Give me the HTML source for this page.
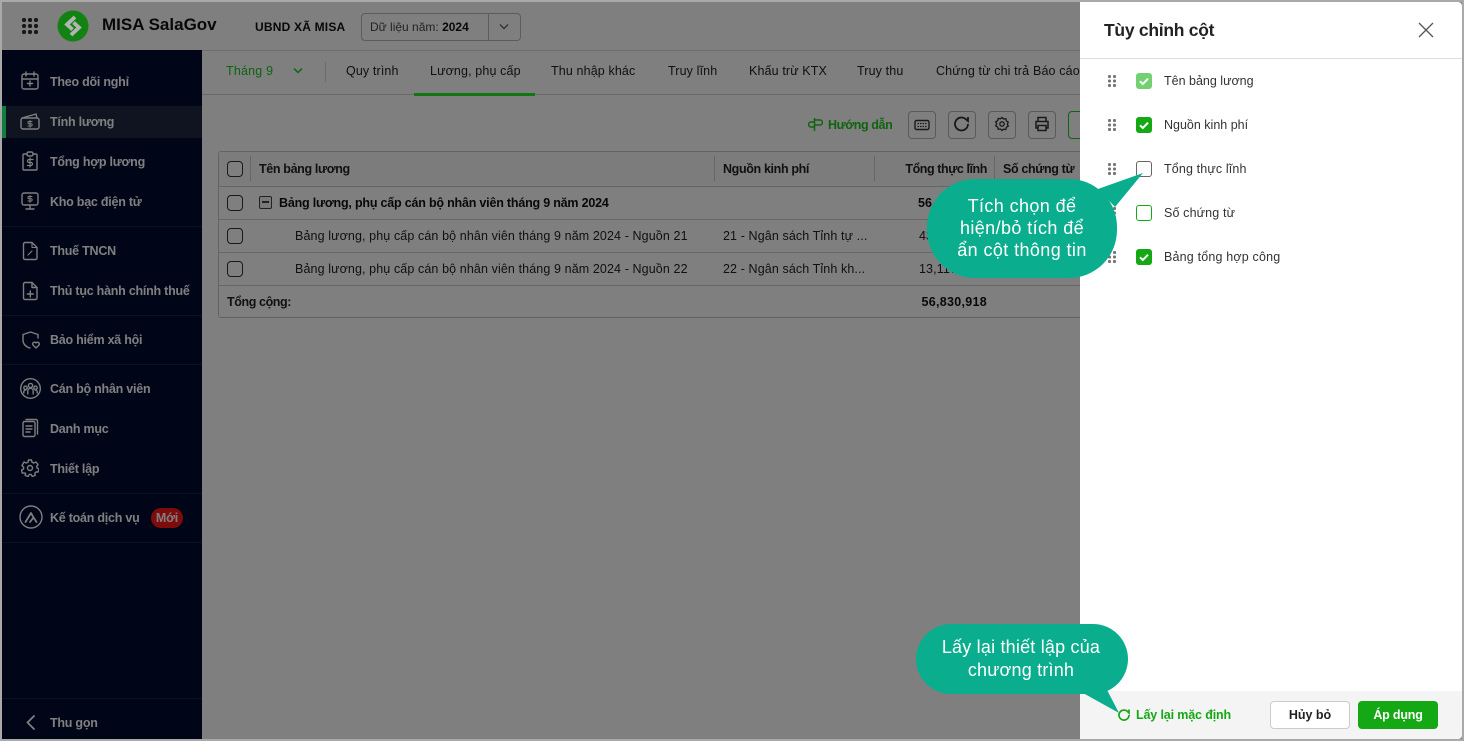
<!DOCTYPE html>
<html lang="vi"><head><meta charset="utf-8"><title>MISA SalaGov</title>
<style>
html,body{margin:0;padding:0;width:1464px;height:741px;overflow:hidden;background:#a9a9a9}
body{font-family:"Liberation Sans",Arial,sans-serif;font-size:13px;color:#222;position:relative}
.t{position:absolute;white-space:nowrap;line-height:16px}
.a{position:absolute}
#app{position:absolute;left:2px;top:2px;width:1460px;height:737px;background:#fff;overflow:hidden}
#root{position:absolute;left:-2px;top:-2px;width:1464px;height:741px}
#side{position:absolute;left:2px;top:50px;width:200px;height:691px;background:#010c30}
.s{color:#fff;font-weight:700;font-size:12.5px;letter-spacing:-.24px;left:50px}
.l{position:absolute;left:2px;width:200px;height:1px;background:#1a2340}
.ic{position:absolute;fill:none;stroke:#fff;stroke-width:1.4;stroke-linecap:round;stroke-linejoin:round}
.tab{top:63px;color:#222;font-size:12.5px;letter-spacing:.13px}
.tb{position:absolute;top:111px;width:26px;height:26px;border:1px solid #b5b5b5;border-radius:4px;background:#fff}
.cb{position:absolute;left:227px;width:14px;height:14px;border:1.5px solid #333;border-radius:4px;background:#fff}
.h{position:absolute;height:1px;left:218px;width:862px;background:#ccc}
.v{position:absolute;top:156px;height:25px;width:1px;background:#ccc}
.c{font-size:12.5px;letter-spacing:.11px}
.hd{top:161px;font-size:12.5px;font-weight:700;color:#222;letter-spacing:-.35px}
#ov{position:absolute;left:0;top:0;width:1464px;height:741px;background:rgba(0,0,0,.5)}
#panel{position:absolute;left:1080px;top:2px;width:382px;height:737px;background:#fff;border-radius:0 4px 4px 0;overflow:hidden}
.lb{position:absolute;left:84px;font-size:12.5px;color:#333;line-height:16px;white-space:nowrap;letter-spacing:.14px}
.box{position:absolute;left:56px;width:16px;height:16px;border-radius:3px;box-sizing:border-box}
.on{background:#14a814}
.dots{position:absolute;left:28px;width:8px;height:12px;background-image:radial-gradient(circle at 1.5px 1.5px,#777 1.5px,transparent 1.7px);background-size:5px 4.5px}
.callout{color:#fff;font-size:18px;line-height:22px;text-align:center;white-space:nowrap;position:absolute}
</style></head><body>
<div id="app"><div id="root">

<!-- header -->
<div class="a" style="left:22px;top:18px;width:17px;height:17px;background-image:radial-gradient(circle at 2px 2px,#333 2px,transparent 2.3px);background-size:6px 6px"></div>
<div class="t" style="left:102px;top:17px;font-size:17px;font-weight:700;color:#111">MISA SalaGov</div>
<div class="t" style="left:255px;top:19px;font-size:12px;font-weight:700;color:#111;letter-spacing:.2px">UBND XÃ MISA</div>
<div class="a" style="left:361px;top:13px;width:158px;height:26px;border:1px solid #b8b8b8;border-radius:4px"></div>
<div class="a" style="left:488px;top:14px;width:1px;height:26px;background:#b8b8b8"></div>
<div class="t" style="left:370px;top:19px;font-size:12px;color:#444">Dữ liệu năm: <b style="color:#111">2024</b></div>
<svg class="a" style="left:498px;top:23px" width="12" height="8" viewBox="0 0 12 8"><path d="M2 1.500l4 4 4-4" fill="none" stroke="#666" stroke-width="1.400"/></svg>
<div class="a" style="left:202px;top:50px;width:1262px;height:1px;background:#ddd"></div>

<!-- sidebar -->
<div id="side"></div>
<div class="a" style="left:2px;top:106px;width:200px;height:32px;background:#1e2840"></div>
<div class="a" style="left:2px;top:106px;width:4px;height:32px;background:#20ff80"></div>
<div class="l" style="top:226px"></div><div class="l" style="top:315px"></div><div class="l" style="top:364px"></div><div class="l" style="top:493px"></div><div class="l" style="top:542px"></div><div class="l" style="top:698px"></div>

<div class="t s" style="top:74px">Theo dõi nghỉ</div>
<div class="t s" style="top:114px">Tính lương</div>
<div class="t s" style="top:154px">Tổng hợp lương</div>
<div class="t s" style="top:194px">Kho bạc điện tử</div>
<div class="t s" style="top:243px">Thuế TNCN</div>
<div class="t s" style="top:283px">Thủ tục hành chính thuế</div>
<div class="t s" style="top:332px">Bảo hiểm xã hội</div>
<div class="t s" style="top:381px">Cán bộ nhân viên</div>
<div class="t s" style="top:421px">Danh mục</div>
<div class="t s" style="top:461px">Thiết lập</div>
<div class="t s" style="top:510px">Kế toán dịch vụ</div>
<div class="a" style="left:151px;top:508px;width:32px;height:20px;border-radius:10px;background:#ff1818"></div>
<div class="t" style="left:151px;top:510px;width:32px;text-align:center;color:#fff;font-weight:700;font-size:12.5px;letter-spacing:-.2px">Mới</div>
<div class="t s" style="top:715px">Thu gọn</div>

<svg class="ic" style="left:20px;top:71px" width="20" height="20" viewBox="0 0 20 20"><rect x="2" y="3" width="16" height="15" rx="2"/><path d="M2 8h16M6 1v4M14 1v4M10 10v5M7.500 12.500h5"/></svg>
<svg class="ic" style="left:20px;top:112px" width="20" height="18" viewBox="0 0 20 18"><rect x="1" y="6" width="18" height="11" rx="2"/><path d="M2 6l14-4 1 4"/><path d="M12 9.500H9a1 1 0 0 0 0 2.200h2a1 1 0 0 1 0 2.300H8M10 8.500v7" stroke-width="1"/></svg>
<svg class="ic" style="left:21px;top:151px" width="18" height="20" viewBox="0 0 18 20"><path d="M6 3H3a1 1 0 0 0-1 1v14a1 1 0 0 0 1 1h12a1 1 0 0 0 1-1V4a1 1 0 0 0-1-1h-3"/><rect x="6" y="1" width="6" height="4" rx="1.500"/><path d="M12 8.500H8a1.500 1.500 0 0 0 0 3h2a1.500 1.500 0 0 1 0 3H6.500M9 7v9" stroke-width="1.200"/></svg>
<svg class="ic" style="left:20px;top:191px" width="20" height="20" viewBox="0 0 20 20"><rect x="2" y="2" width="16" height="12" rx="2"/><path d="M10 14v4M6 18h8"/><path d="M12 5.500H9a1 1 0 0 0 0 2.200h2a1 1 0 0 1 0 2.300H8M10 4.500v7" stroke-width="1"/></svg>
<svg class="ic" style="left:21px;top:241px" width="18" height="20" viewBox="0 0 18 20"><path d="M4 1.500h7l5 5V17a1.500 1.500 0 0 1-1.500 1.500h-10.500A1.500 1.500 0 0 1 2.500 17V3A1.500 1.500 0 0 1 4 1.500z"/><path d="M11 1.500V6.500h5M7 14l4-4" stroke-width="1.100"/></svg>
<svg class="ic" style="left:21px;top:281px" width="18" height="20" viewBox="0 0 18 20"><path d="M4 1.500h7l5 5V17a1.500 1.500 0 0 1-1.500 1.500h-10.500A1.500 1.500 0 0 1 2.500 17V3A1.500 1.500 0 0 1 4 1.500z"/><path d="M11 1.500V6.500h5M9.300 10v6M6.300 13h6"/></svg>
<svg class="ic" style="left:21px;top:330px" width="20" height="20" viewBox="0 0 20 20"><path d="M17 8V4.500L9.500 2 2 4.500V10c0 4 3 7 7 8"/><path d="M15 18l-3-3a1.800 1.800 0 0 1 3-2 1.800 1.800 0 0 1 3 2z"/></svg>
<svg class="ic" style="left:20px;top:378px" width="21" height="21" viewBox="0 0 21 21"><circle cx="10.500" cy="10.500" r="9.800"/><circle cx="10.500" cy="7.500" r="2.100"/><circle cx="5.500" cy="9.800" r="1.700"/><circle cx="15.500" cy="9.800" r="1.700"/><path d="M7.800 16v-3a2.700 2.700 0 0 1 5.400 0v3M3.800 15v-1.500a1.800 1.800 0 0 1 2-1.500M17.200 15v-1.500a1.800 1.800 0 0 0-2-1.500"/></svg>
<svg class="ic" style="left:21px;top:418px" width="18" height="20" viewBox="0 0 18 20"><rect x="2" y="3.500" width="12" height="15" rx="1.500"/><path d="M5 1.500h10a1.500 1.500 0 0 1 1.500 1.500v13M5 8h6M5 11h6M5 14h4"/></svg>
<svg class="ic" style="left:21px;top:459px" width="18" height="18" viewBox="0 0 18 18"><circle cx="9" cy="9" r="2.500"/><path d="M7.500 1h3l.5 2.200 1.800.8L15 3l2 2.500-1.300 1.800.3 1.700 2 1-.8 3-2.200-.1-1.200 1.400.4 2.200-3 .9-1-2h-2l-1 2-3-.9.4-2.200L3.400 14l-2.200.1-.8-3 2-1 .3-1.700L1 6.500 3 3l2.200 1 1.800-.8z"/></svg>
<svg class="ic" style="left:19px;top:505px" width="24" height="24" viewBox="0 0 24 24"><circle cx="12" cy="12" r="11"/><path d="M6.500 17L12 8l2.500 4.500M11 17l3.500-4.500 3 4.500" stroke-width="1.800"/></svg>
<svg class="ic" style="left:24px;top:714px" width="13" height="17" viewBox="0 0 13 17"><path d="M10 2L3.500 8.500 10 15" stroke-width="1.800"/></svg>

<!-- tabs -->
<div class="a" style="left:202px;top:94px;width:878px;height:1px;background:#d5d5d5"></div>
<div class="t" style="left:226px;top:63px;font-size:12.5px;color:#1ec81e;letter-spacing:.2px">Tháng 9</div>
<svg class="a" style="left:292px;top:67px" width="12" height="8" viewBox="0 0 12 8"><path d="M2 1.500l4 4 4-4" fill="none" stroke="#1ec81e" stroke-width="1.500"/></svg>
<div class="a" style="left:325px;top:62px;width:1px;height:20px;background:#d5d5d5"></div>
<div class="t tab" style="left:346px">Quy trình</div>
<div class="t tab" style="left:430px">Lương, phụ cấp</div>
<div class="t tab" style="left:551px">Thu nhập khác</div>
<div class="t tab" style="left:668px">Truy lĩnh</div>
<div class="t tab" style="left:749px">Khấu trừ KTX</div>
<div class="t tab" style="left:857px">Truy thu</div>
<div class="t tab" style="left:936px">Chứng từ chi trả</div>
<div class="t tab" style="left:1033px">Báo cáo</div>
<div class="a" style="left:414px;top:93px;width:121px;height:3px;background:#22f022"></div>

<!-- toolbar -->
<svg class="a" style="left:808px;top:117px" width="15" height="15" viewBox="0 0 15 15"><path d="M6.500 1v13M6.500 3h5.500a2.500 2.500 0 0 1 0 5H6.500M6.500 5H3a2.500 2.500 0 0 0 0 5h3.500" fill="none" stroke="#1ec81e" stroke-width="1.500"/></svg>
<div class="t" style="left:828px;top:117px;font-size:12.5px;font-weight:700;color:#1ec81e;letter-spacing:-.4px">Hướng dẫn</div>
<div class="tb" style="left:908px"></div><div class="tb" style="left:948px"></div><div class="tb" style="left:988px"></div><div class="tb" style="left:1028px"></div>
<div class="a" style="left:1068px;top:111px;width:30px;height:26px;border:1px solid #1ec81e;border-radius:4px;background:#fff"></div>
<svg class="a" style="left:914px;top:118px" width="16" height="14" viewBox="0 0 16 14"><rect x="1" y="2.500" width="14" height="9" rx="1.500" fill="none" stroke="#333" stroke-width="1.400"/><path d="M3.500 5.500h9M3.500 8.500h9" stroke="#333" stroke-width="1.200" stroke-dasharray="1.500 1"/></svg>
<svg class="a" style="left:953px;top:115px" width="18" height="18" viewBox="0 0 18 18"><path d="M15 9a6.500 6.500 0 1 1-2-4.700L15 6V2" fill="none" stroke="#333" stroke-width="1.800"/></svg>
<svg class="a" style="left:994px;top:116px" width="16" height="16" viewBox="0 0 16 16"><circle cx="8" cy="8" r="2.200" fill="none" stroke="#333" stroke-width="1.300"/><path d="M8 1.500l1.500 1.500 2.300-.3.500 2.200 2 1.200-1 2 1 2-2 1.200-.5 2.200-2.300-.3L8 14.500l-1.500-1.500-2.300.3-.5-2.200-2-1.200 1-2-1-2 2-1.200.5-2.200 2.300.3z" fill="none" stroke="#333" stroke-width="1.300"/></svg>
<svg class="a" style="left:1034px;top:116px" width="16" height="16" viewBox="0 0 16 16"><path d="M4 5V1.500h8V5M4 12H2V5.500h12V12h-2M4 9.500h8v5H4z" fill="none" stroke="#333" stroke-width="1.500"/></svg>

<!-- table -->
<div class="a" style="left:218px;top:151px;width:880px;height:165px;border:1px solid #c4c4c4;border-radius:3px 0 0 3px"></div>
<div class="a" style="left:219px;top:152px;width:861px;height:34px;background:#f8f8f8"></div>
<div class="h" style="top:186px"></div><div class="h" style="top:219px"></div><div class="h" style="top:252px"></div><div class="h" style="top:285px"></div>
<div class="v" style="left:250px"></div><div class="v" style="left:714px"></div><div class="v" style="left:874px"></div><div class="v" style="left:994px"></div>
<div class="cb" style="top:161px"></div><div class="cb" style="top:195px"></div><div class="cb" style="top:228px"></div><div class="cb" style="top:261px"></div>
<div class="t hd" style="left:259px">Tên bảng lương</div>
<div class="t hd" style="left:723px">Nguồn kinh phí</div>
<div class="t hd" style="left:880px;width:107px;text-align:right;letter-spacing:-.42px">Tổng thực lĩnh</div>
<div class="t hd" style="left:1003px">Số chứng từ</div>
<div class="a" style="left:259px;top:196px;width:11px;height:11px;border:1.500px solid #444;border-radius:2px;background:#f2f2f2"></div>
<div class="a" style="left:262px;top:201px;width:7px;height:2px;background:#444"></div>
<div class="t c" style="left:279px;font-weight:700;color:#111;top:195px;letter-spacing:-.2px">Bảng lương, phụ cấp cán bộ nhân viên tháng 9 năm 2024</div>
<div class="t c" style="left:918px;font-weight:700;color:#111;top:195px">56,830,918</div>
<div class="t c" style="left:295px;top:228px">Bảng lương, phụ cấp cán bộ nhân viên tháng 9 năm 2024 - Nguồn 21</div>
<div class="t c" style="left:723px;top:228px">21 - Ngân sách Tỉnh tự ...</div>
<div class="t c" style="left:919px;top:228px">43,713,000</div>
<div class="t c" style="left:295px;top:261px">Bảng lương, phụ cấp cán bộ nhân viên tháng 9 năm 2024 - Nguồn 22</div>
<div class="t c" style="left:723px;top:261px">22 - Ngân sách Tỉnh kh...</div>
<div class="t c" style="left:919px;top:261px">13,117,918</div>
<div class="t c" style="left:227px;top:294px;font-weight:700;color:#222;letter-spacing:-.4px">Tổng cộng:</div>
<div class="t c" style="left:880px;width:107px;text-align:right;top:294px;font-weight:700;color:#111;letter-spacing:.3px">56,830,918</div>

<div id="ov"></div>

<!-- logo above dim layer with explicit dimmed colours -->
<svg class="a" style="left:57px;top:10px" width="32" height="32" viewBox="0 0 32 32"><circle cx="16" cy="16" r="15.500" fill="#128312"/><g fill="none" stroke="#b4b4b4" stroke-width="3.800"><path d="M18 7l-8 7.500 5.500 5"/><path d="M14 25l8-7.500-5.500-5"/></g></svg>

<!-- panel -->
<div id="panel">
 <div class="t" style="left:24px;top:18px;font-size:17.5px;line-height:20px;font-weight:700;color:#222;letter-spacing:-.27px">Tùy chỉnh cột</div>
 <svg class="a" style="left:337px;top:19px" width="18" height="18" viewBox="0 0 18 18"><path d="M2 2l14 14M16 2L2 16" stroke="#555" stroke-width="1.300"/></svg>
 <div class="a" style="left:0;top:56px;width:382px;height:1px;background:#ddd"></div>

 <div class="dots" style="top:73px"></div><div class="dots" style="top:117px"></div><div class="dots" style="top:161px"></div><div class="dots" style="top:205px"></div><div class="dots" style="top:249px"></div>

 <div class="box" style="top:71px;background:#73d073"><svg width="16" height="16" viewBox="0 0 16 16"><path d="M4 8.300l2.800 2.700L12 5.700" fill="none" stroke="#fff" stroke-width="2"/></svg></div>
 <div class="box on" style="top:115px"><svg width="16" height="16" viewBox="0 0 16 16"><path d="M4 8.300l2.800 2.700L12 5.700" fill="none" stroke="#fff" stroke-width="2"/></svg></div>
 <div class="box" style="top:159px;border:1px solid #666;background:#fff"></div>
 <div class="box" style="top:203px;border:1px solid #14a814;background:#fff"></div>
 <div class="box on" style="top:247px"><svg width="16" height="16" viewBox="0 0 16 16"><path d="M4 8.300l2.800 2.700L12 5.700" fill="none" stroke="#fff" stroke-width="2"/></svg></div>

 <div class="lb" style="top:71px;letter-spacing:0">Tên bảng lương</div>
 <div class="lb" style="top:115px;letter-spacing:0">Nguồn kinh phí</div>
 <div class="lb" style="top:159px">Tổng thực lĩnh</div>
 <div class="lb" style="top:203px">Số chứng từ</div>
 <div class="lb" style="top:247px;letter-spacing:.18px">Bảng tổng hợp công</div>

 <div class="a" style="left:0;top:689px;width:382px;height:48px;background:#f4f4f4"></div>
 <svg class="a" style="left:37px;top:706px" width="14" height="14" viewBox="0 0 14 14"><path d="M12 7a5 5 0 1 1-1.500-3.500L12 5V1.500" fill="none" stroke="#14a814" stroke-width="1.700"/></svg>
 <div class="t" style="left:56px;top:705px;font-size:12.5px;font-weight:700;color:#14a814;letter-spacing:-.14px">Lấy lại mặc định</div>
 <div class="a" style="left:190px;top:699px;width:78px;height:26px;border:1px solid #ccc;border-radius:4px;background:#fff;text-align:center;line-height:26px;font-size:12.5px;font-weight:700;color:#222">Hủy bỏ</div>
 <div class="a" style="left:278px;top:699px;width:80px;height:28px;border-radius:4px;background:#14a814;text-align:center;line-height:28px;font-size:12.5px;font-weight:700;color:#fff;letter-spacing:-.2px">Áp dụng</div>
</div>

<!-- callouts -->
<svg class="a" style="left:0;top:0" width="1464" height="741" viewBox="0 0 1464 741">
 <rect x="927" y="179" width="190" height="99" rx="48" ry="48" fill="#0aae8e"/>
 <path d="M1098 189L1143 173 1115 207z" fill="#0aae8e"/>
 <rect x="916" y="624" width="212" height="70" rx="35" ry="35" fill="#0aae8e"/>
 <path d="M1083 693L1119 713 1106 688z" fill="#0aae8e"/>
</svg>
<div class="callout" style="left:927px;top:195px;width:190px;letter-spacing:.4px">Tích chọn để<br>hiện/bỏ tích để<br>ẩn cột thông tin</div>
<div class="callout" style="left:915px;top:636px;width:212px;line-height:23px;letter-spacing:.2px">Lấy lại thiết lập của<br>chương trình</div>

</div></div>
</body></html>
